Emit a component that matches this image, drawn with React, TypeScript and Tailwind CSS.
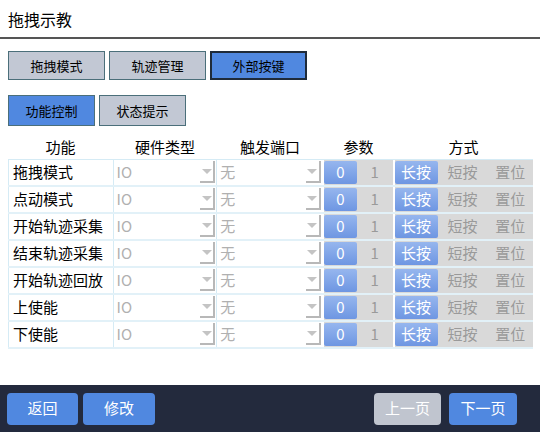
const rows = ['拖拽模式', '点动模式', '开始轨迹采集', '结束轨迹采集', '开始轨迹回放', '上使能', '下使能'];

const font = { fontFamily: '"Noto Sans CJK SC", "Noto Sans", sans-serif' };

function SelectCell({ text, width }: { text: string; width: string }) {
  return (
    <div className={`${width} flex items-stretch border-l border-[#d5ebf5] bg-white pl-[2px]`}>
      <div className="flex flex-1 items-center pl-[1px] text-[15px] text-[#b0b0b0]">{text}</div>
      <div className="mr-[1px] mb-[2px] mt-[1px] flex w-[15px] items-center justify-center border-r-[2px] border-b-[2px] border-[#b8b8b8]">
        <div className="h-0 w-0 border-x-[5px] border-t-[5px] border-x-transparent border-t-[#c4c4c4]" />
      </div>
    </div>
  );
}

export default function App() {
  return (
    <div className="flex h-[432px] w-[540px] flex-col bg-white text-black" style={font}>
      <div className="flex h-[37px] items-center pl-[8px] text-[16px]">拖拽示教</div>
      <div className="h-[2px] bg-[#555]" />

      <div className="mt-[12px] flex gap-[4px] pl-[8px]">
        <button className="h-[29px] w-[97px] border border-[#4b6f7a] bg-[#c2c8d4] text-[13px]">拖拽模式</button>
        <button className="h-[29px] w-[97px] border border-[#4b6f7a] bg-[#c2c8d4] text-[13px]">轨迹管理</button>
        <button className="h-[29px] w-[97px] border-2 border-[#1f2b3a] bg-[#5088e0] text-[13px]">外部按键</button>
      </div>

      <div className="mt-[15px] flex gap-[4px] pl-[8px]">
        <button className="h-[31px] w-[87px] border border-[#4b6f7a] bg-[#5088e0] text-[13px]">功能控制</button>
        <button className="h-[31px] w-[87px] border border-[#4b6f7a] bg-[#c2c8d4] text-[13px]">状态提示</button>
      </div>

      <div className="mt-[10px] flex h-[23px] items-center pl-[8px] text-[15px]">
        <div className="w-[105px] text-center">功能</div>
        <div className="w-[104px] text-center">硬件类型</div>
        <div className="w-[106px] text-center">触发端口</div>
        <div className="w-[71px] text-center">参数</div>
        <div className="w-[139px] text-center">方式</div>
      </div>

      <div className="ml-[8px] w-[525px] border-t border-[#d5ebf5]">
        {rows.map((r) => (
          <div key={r} className="flex h-[27px] border-b-[2px] border-[#e2f1f8]">
            <div className="flex w-[105px] items-center border-l border-[#d5ebf5] pl-[4px] text-[15px]">{r}</div>
            <SelectCell text="IO" width="w-[104px]" />
            <SelectCell text="无" width="w-[106px]" />
            <div className="ml-[2px] flex w-[69px] items-stretch bg-[#d9d9d9] py-[1px]">
              <div className="flex w-[33px] items-center justify-center rounded-[2px] bg-gradient-to-b from-[#96b6ee] to-[#6e96e2] text-[15px] text-white">0</div>
              <div className="flex flex-1 items-center justify-center text-[15px] text-[#9a9a9a]">1</div>
            </div>
            <div className="ml-[2px] flex w-[139px] items-stretch bg-[#d9d9d9] py-[1px] text-[15px]">
              <div className="flex w-[43px] items-center justify-center rounded-[2px] bg-gradient-to-b from-[#96b6ee] to-[#6e96e2] text-white">长按</div>
              <div className="flex w-[50px] items-center justify-center text-[#9a9a9a]">短按</div>
              <div className="flex flex-1 items-center justify-center text-[#9a9a9a]">置位</div>
            </div>
          </div>
        ))}
      </div>

      <div className="flex-1" />

      <div className="flex h-[47px] items-center bg-[#232a3d] px-[7px] text-[15px] text-white">
        <button className="h-[32px] w-[71px] rounded-[4px] bg-[#5088e0]">返回</button>
        <button className="ml-[5px] h-[32px] w-[72px] rounded-[4px] bg-[#5088e0]">修改</button>
        <div className="flex-1" />
        <button className="h-[32px] w-[67px] rounded-[4px] bg-[#c0c5cf]">上一页</button>
        <button className="ml-[8px] mr-[16px] h-[32px] w-[68px] rounded-[4px] bg-[#5088e0]">下一页</button>
      </div>
    </div>
  );
}
